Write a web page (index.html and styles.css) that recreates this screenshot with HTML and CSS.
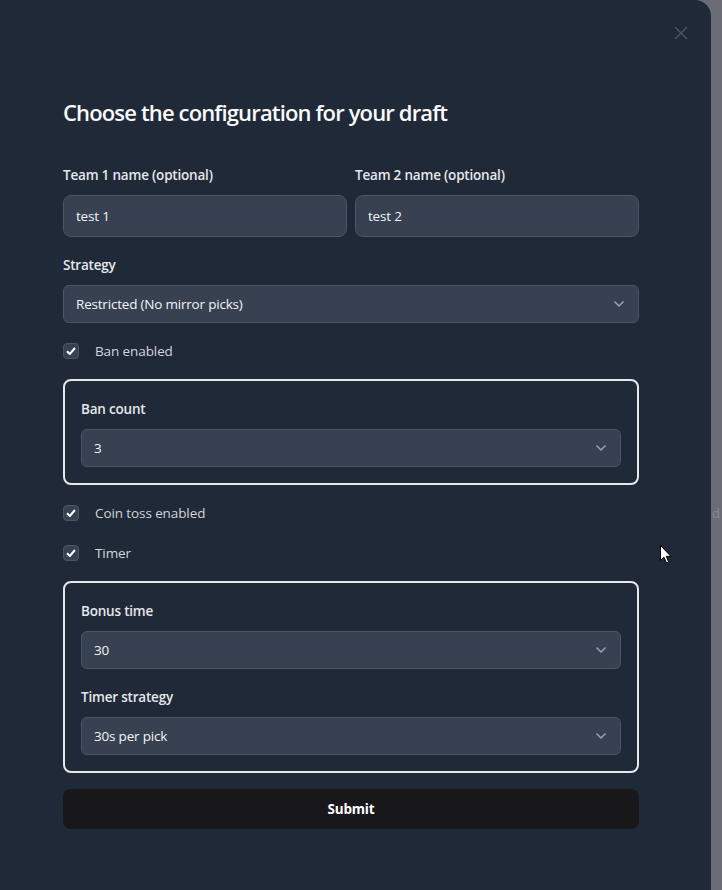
FILE: index.html
```html
<!DOCTYPE html>
<html>
<head>
<meta charset="utf-8">
<link rel="stylesheet" href="styles.css">
</head>
<body>
<div class="page">
  <div class="modal">
    <button class="close" aria-label="Close">
      <svg width="14" height="14" viewBox="0 0 14 14"><path d="M1 1L13 13M13 1L1 13" stroke="#4b5563" stroke-width="1.4" fill="none"/></svg>
    </button>
    <h1 class="title">Choose the configuration for your draft</h1>
    <form class="form">
      <div class="row2">
        <div class="field">
          <label class="label">Team 1 name (optional)</label>
          <div class="input">test 1</div>
        </div>
        <div class="field">
          <label class="label">Team 2 name (optional)</label>
          <div class="input">test 2</div>
        </div>
      </div>
      <div class="field">
        <label class="label">Strategy</label>
        <div class="select">Restricted (No mirror picks)<svg class="chev" width="12" height="8" viewBox="0 0 12 8"><path d="M1.5 1.5L6 6L10.5 1.5" stroke="#9ca3af" stroke-width="1.5" fill="none"/></svg></div>
      </div>
      <div class="check"><span class="box"><svg width="10" height="8" viewBox="0 0 10 8"><path d="M1 4.2L3.8 7L9 1" stroke="#fff" stroke-width="2" fill="none"/></svg></span><span>Ban enabled</span></div>
      <div class="panel">
        <div class="field">
          <label class="label">Ban count</label>
          <div class="select">3<svg class="chev" width="12" height="8" viewBox="0 0 12 8"><path d="M1.5 1.5L6 6L10.5 1.5" stroke="#9ca3af" stroke-width="1.5" fill="none"/></svg></div>
        </div>
      </div>
      <div class="check first"><span class="box"><svg width="10" height="8" viewBox="0 0 10 8"><path d="M1 4.2L3.8 7L9 1" stroke="#fff" stroke-width="2" fill="none"/></svg></span><span>Coin toss enabled</span></div>
      <div class="check tight"><span class="box"><svg width="10" height="8" viewBox="0 0 10 8"><path d="M1 4.2L3.8 7L9 1" stroke="#fff" stroke-width="2" fill="none"/></svg></span><span>Timer</span></div>
      <div class="panel">
        <div class="field">
          <label class="label">Bonus time</label>
          <div class="select">30<svg class="chev" width="12" height="8" viewBox="0 0 12 8"><path d="M1.5 1.5L6 6L10.5 1.5" stroke="#9ca3af" stroke-width="1.5" fill="none"/></svg></div>
        </div>
        <div class="field">
          <label class="label">Timer strategy</label>
          <div class="select">30s per pick<svg class="chev" width="12" height="8" viewBox="0 0 12 8"><path d="M1.5 1.5L6 6L10.5 1.5" stroke="#9ca3af" stroke-width="1.5" fill="none"/></svg></div>
        </div>
      </div>
      <button type="button" class="submit">Submit</button>
    </form>
    <svg class="cursor" width="12" height="19" viewBox="0 0 12 19"><path d="M0.5 0.5L0.5 15.5L4 12.2L6.5 18L8.7 17L6.3 11.4L11 11.4Z" fill="#fff" stroke="#000" stroke-width="1"/></svg>
  </div>
  <div class="side"><span class="side-text">d</span></div>
</div>
</body>
</html>
```
FILE: styles.css
```css
* { box-sizing: border-box; }
html, body { margin: 0; padding: 0; }
body {
  background: #6c6c77;
  font-family: "Open Sans", "Noto Sans", sans-serif;
  color: #e5e7eb;
}
.page {
  display: flex;
  width: 722px;
  height: 890px;
  overflow: hidden;
}
.modal {
  position: relative;
  width: 711px;
  height: 890px;
  flex: none;
  background: #202938;
  border-top-right-radius: 16px;
  padding: 96px 72px 0 63px;
}
.side {
  flex: 1;
  position: relative;
}
.side-text {
  position: absolute;
  top: 504px;
  left: 1px;
  color: #8a8a94;
  font-size: 13px;
}
.close {
  position: absolute;
  top: 26px;
  right: 23px;
  width: 14px;
  height: 14px;
  padding: 0;
  border: 0;
  background: none;
  display: flex;
}
.cursor {
  position: absolute;
  left: 660px;
  top: 545px;
}
.title {
  margin: 0 0 37px;
  font-size: 22px;
  font-weight: 600;
  letter-spacing: -0.85px;
  color: #f9fafb;
  line-height: 32px;
}
.form {
  display: flex;
  flex-direction: column;
  width: 576px;
}
.row2 {
  display: grid;
  grid-template-columns: 1fr 1fr;
  gap: 8px;
  margin-bottom: 18px;
}
.field {
  display: flex;
  flex-direction: column;
}
.label {
  font-size: 13.5px;
  font-weight: 600;
  line-height: 20px;
  color: #e5e7eb;
  margin-bottom: 10px;
  letter-spacing: -0.2px;
}
.input {
  height: 42px;
  background: #374151;
  border: 1px solid #4b5563;
  border-radius: 8px;
  padding: 0 12px;
  display: flex;
  align-items: center;
  font-size: 13.5px;
  color: #f3f4f6;
  letter-spacing: -0.2px;
}
.select {
  height: 38px;
  background: #374151;
  border: 1px solid #4b5563;
  border-radius: 6px;
  padding: 0 12px;
  display: flex;
  align-items: center;
  justify-content: space-between;
  font-size: 13.5px;
  color: #f3f4f6;
  letter-spacing: -0.2px;
}
.chev { margin-right: 1px; }
.check {
  display: flex;
  align-items: center;
  height: 16px;
  margin: 20px 0 20px;
  font-size: 13.5px;
  color: #d1d5db;
  letter-spacing: -0.1px;
}
.check.first { margin-top: 20px; margin-bottom: 0; }
.check.tight { margin-top: 24px; }
.box {
  width: 16px;
  height: 16px;
  border-radius: 4px;
  background: #374151;
  border: 1px solid #4b5563;
  display: flex;
  align-items: center;
  justify-content: center;
  margin-right: 16px;
}
.panel {
  border: 2px solid #e5e7eb;
  border-radius: 8px;
  padding: 18px 16px 16px;
  display: flex;
  flex-direction: column;
  gap: 18px;
}
.submit {
  margin-top: 16px;
  height: 40px;
  border: 0;
  border-radius: 8px;
  background: #18181b;
  color: #fff;
  font-family: inherit;
  font-size: 13.5px;
  font-weight: 700;
  letter-spacing: -0.2px;
}
```
